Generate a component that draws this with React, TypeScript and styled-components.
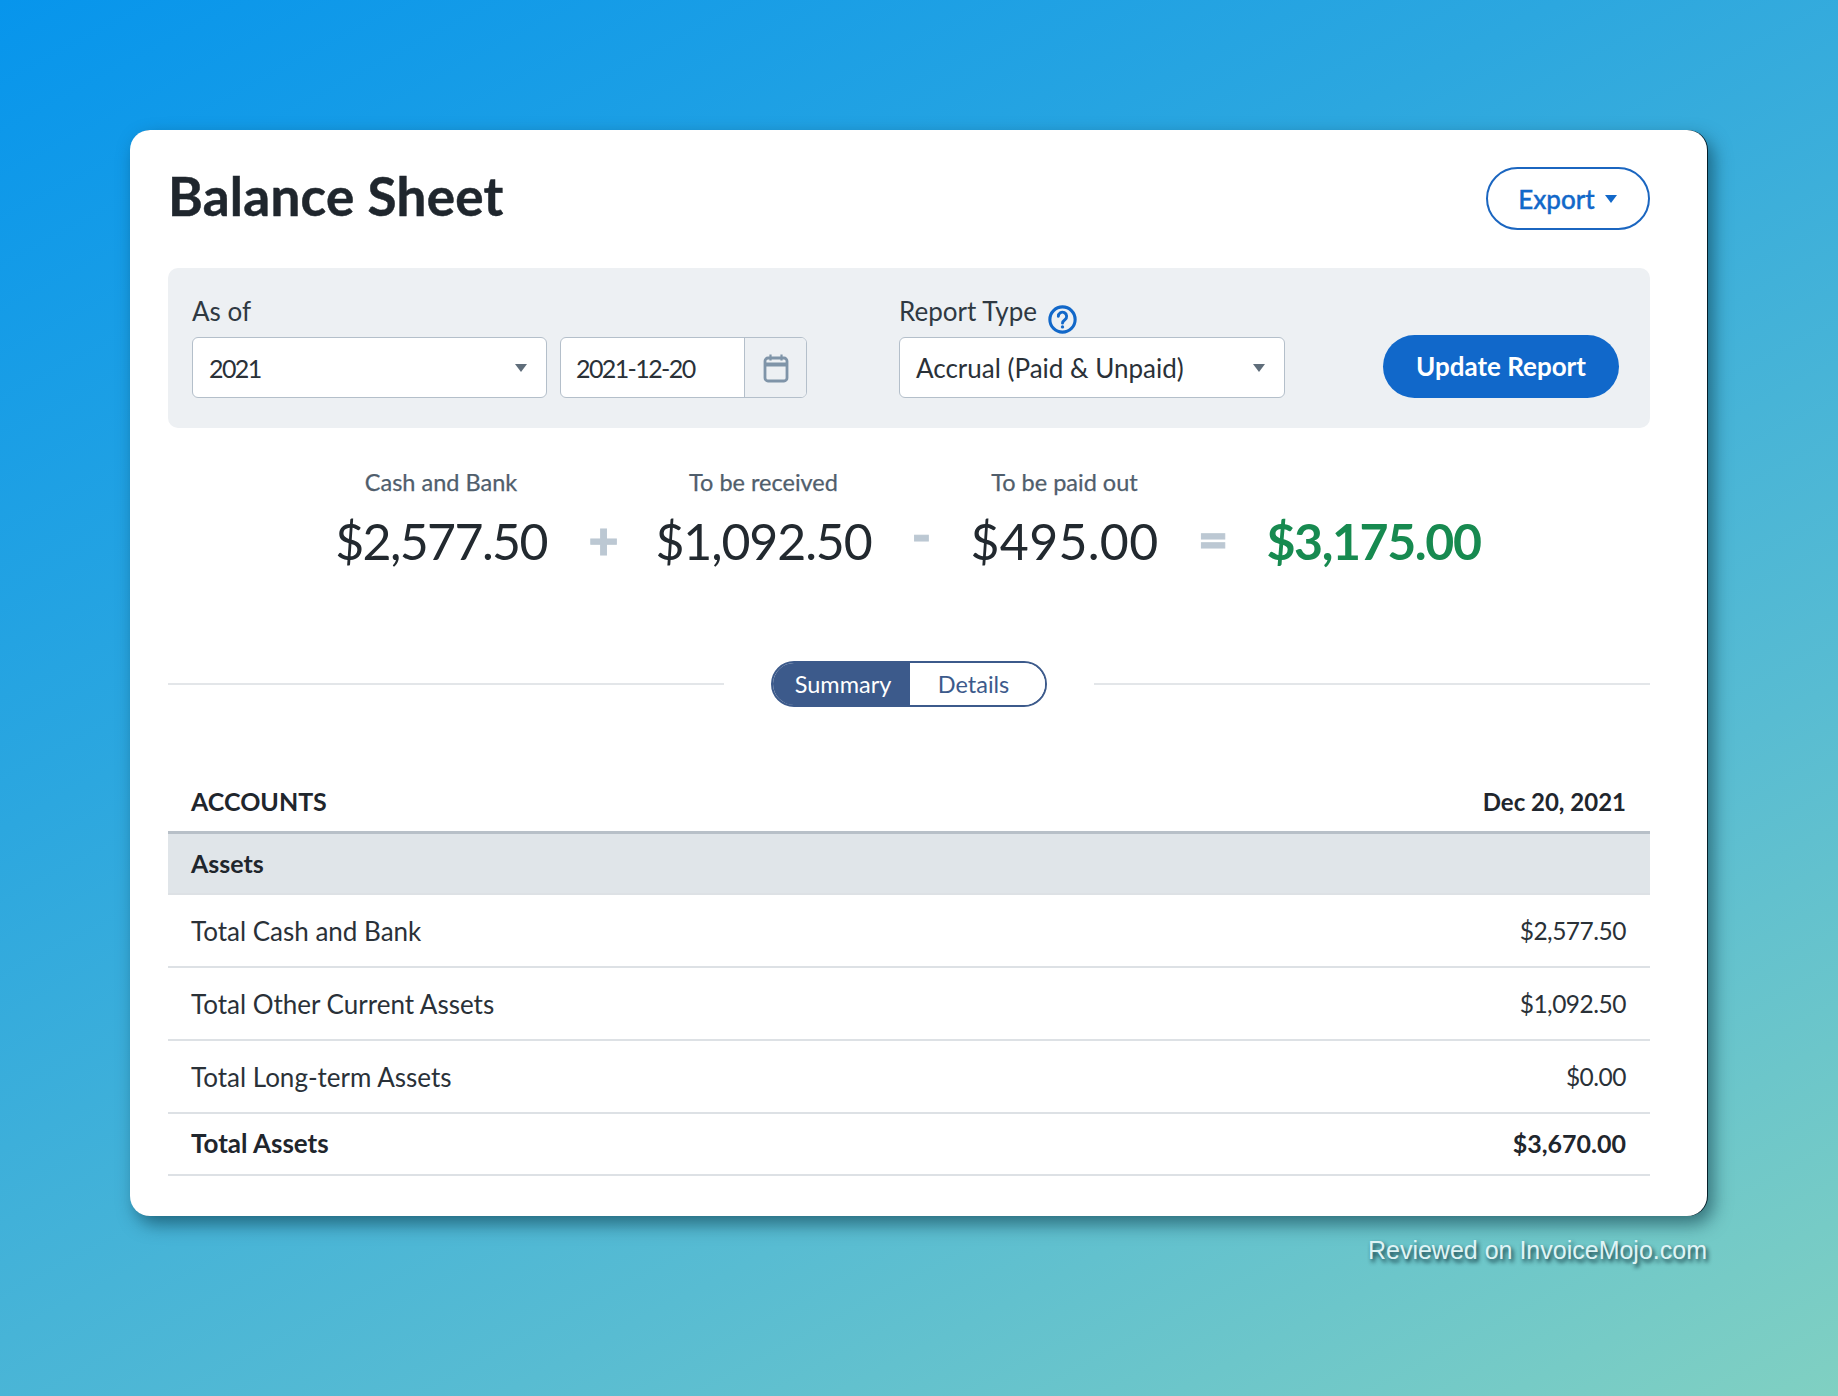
import React from 'react'
import styled, { createGlobalStyle } from 'styled-components'

const rows = [
  { name: 'Total Cash and Bank', amount: '$2,577.50' },
  { name: 'Total Other Current Assets', amount: '$1,092.50' },
  { name: 'Total Long-term Assets', amount: '$0.00' },
]

function Caret({ color = '#5f6d7a' }: { color?: string }) {
  return (
    <svg width="14" height="10" viewBox="0 0 14 10">
      <path d="M1 1h12L7 9z" fill={color} />
    </svg>
  )
}

function CalendarIcon() {
  return (
    <svg width="26" height="30" viewBox="0 0 26 30" fill="none" stroke="#7f94a8" strokeWidth="2.8">
      <rect x="2" y="5" width="22" height="23" rx="3" />
      <path d="M2 11.5h22" strokeWidth="4" />
      <path d="M7.5 1.5v6M18.5 1.5v6" strokeWidth="2.2" />
    </svg>
  )
}

function HelpIcon() {
  return (
    <svg width="29" height="29" viewBox="0 0 28 28" fill="none" stroke="#1268c9">
      <circle cx="14" cy="14" r="12.2" strokeWidth="3" />
      <path d="M10 11a4 4 0 1 1 6.3 3.2c-1.4 1-2.3 1.7-2.3 3.3" strokeWidth="2.8" strokeLinecap="round" />
      <circle cx="14" cy="21.2" r="1.6" fill="#1268c9" stroke="none" />
    </svg>
  )
}

export default function App() {
  return (
    <>
      <GlobalStyle />
      <Page>
        <Card>
          <Header>
            <Title>Balance Sheet</Title>
            <ExportButton>
              Export
              <Caret color="#1268c9" />
            </ExportButton>
          </Header>

          <FilterPanel>
            <Field>
              <Label>As of</Label>
              <Controls>
                <Select $width={355}>
                  <YearText>2021</YearText>
                  <Caret />
                </Select>
                <DateInput>
                  <DateValue>2021-12-20</DateValue>
                  <DateAddon>
                    <CalendarIcon />
                  </DateAddon>
                </DateInput>
              </Controls>
            </Field>
            <Field>
              <Label>
                Report Type
                <HelpWrap>
                  <HelpIcon />
                </HelpWrap>
              </Label>
              <Select $width={386}>
                <span>Accrual (Paid &amp; Unpaid)</span>
                <Caret />
              </Select>
            </Field>
            <UpdateButton>Update Report</UpdateButton>
          </FilterPanel>

          <Summary>
            <Stat $width={208}>
              <StatLabel>Cash and Bank</StatLabel>
              <StatValue $spacing={-1.6}>$2,577.50</StatValue>
            </Stat>
            <Operator $width={117}>+</Operator>
            <Stat $width={203}>
              <StatLabel>To be received</StatLabel>
              <StatValue $spacing={-1.1}>$1,092.50</StatValue>
            </Stat>
            <Operator $width={113} $lift={5}>-</Operator>
            <Stat $width={173}>
              <StatLabel>To be paid out</StatLabel>
              <StatValue $spacing={0.3}>$495.00</StatValue>
            </Stat>
            <Operator $width={124} $lift={1}>=</Operator>
            <Stat $width={197}>
              <StatLabel>&nbsp;</StatLabel>
              <StatValue $total>$3,175.00</StatValue>
            </Stat>
          </Summary>

          <ToggleRow>
            <Rule />
            <Toggle>
              <SummaryTab>Summary</SummaryTab>
              <DetailsTab>Details</DetailsTab>
            </Toggle>
            <Rule />
          </ToggleRow>

          <Table>
            <TableHead>
              <span>ACCOUNTS</span>
              <HeadDate>Dec 20, 2021</HeadDate>
            </TableHead>
            <SectionRow>Assets</SectionRow>
            {rows.map((r) => (
              <Row key={r.name}>
                <span>{r.name}</span>
                <Amount>{r.amount}</Amount>
              </Row>
            ))}
            <TotalRow>
              <span>Total Assets</span>
              <TotalAmount>$3,670.00</TotalAmount>
            </TotalRow>
          </Table>
        </Card>
        <Watermark>Reviewed on InvoiceMojo.com</Watermark>
      </Page>
    </>
  )
}

const GlobalStyle = createGlobalStyle`
  html, body {
    margin: 0;
    padding: 0;
  }

  body {
    font-family: Lato, "Open Sans", sans-serif;
    color: #22292f;
  }

  * {
    box-sizing: border-box;
  }
`

const Page = styled.div`
  width: 1838px;
  height: 1396px;
  padding: 130px 131px 0 130px;
  overflow: hidden;
  background: linear-gradient(152deg, #0795ec 0%, #2ca7df 35%, #58bcd2 70%, #80d0c2 100%);
`

const Card = styled.div`
  height: 1086px;
  padding: 37px 57px 42px 38px;
  background: #fff;
  border-radius: 20px;
  box-shadow: 1px 0 0 rgba(0, 20, 30, 0.9), 6px 8px 18px rgba(0, 40, 55, 0.55);
`

const Header = styled.div`
  display: flex;
  align-items: flex-start;
  justify-content: space-between;
`

const Title = styled.h1`
  margin: -2px 0 0 0;
  font-size: 53px;
  line-height: 62px;
  font-weight: 700;
  letter-spacing: 0.25px;
  color: #1f262d;
  -webkit-text-stroke: 0.5px #1f262d;
`

const ExportButton = styled.button`
  display: flex;
  align-items: center;
  justify-content: center;
  gap: 9px;
  width: 164px;
  height: 63px;
  padding-top: 1px;
  background: #fff;
  border: 2px solid #1b66c0;
  border-radius: 32px;
  color: #1268c9;
  font: 500 26px Lato, sans-serif;
  -webkit-text-stroke: 0.4px #1268c9;
`

const FilterPanel = styled.div`
  display: flex;
  align-items: flex-end;
  gap: 92px;
  height: 160px;
  margin-top: 38px;
  padding: 0 31px 30px 24px;
  background: #edf0f3;
  border-radius: 10px;
`

const Field = styled.div`
  display: flex;
  flex-direction: column;
`

const Label = styled.div`
  display: flex;
  align-items: flex-start;
  height: 30px;
  margin-bottom: 11px;
  font-size: 26px;
  line-height: 30px;
  color: #2f3942;
`

const HelpWrap = styled.span`
  display: inline-flex;
  margin: 9px 0 0 11px;
`

const Controls = styled.div`
  display: flex;
  gap: 13px;
`

const Select = styled.div<{ $width: number }>`
  display: flex;
  align-items: center;
  justify-content: space-between;
  width: ${(p) => p.$width}px;
  height: 61px;
  padding: 0 18px 0 16px;
  background: #fff;
  border: 1.5px solid #b4bfca;
  border-radius: 6px;
  font-size: 26px;
  color: #2a3138;
`

const YearText = styled.span`
  font-size: 25px;
  letter-spacing: -1.6px;
`

const DateInput = styled.div`
  display: flex;
  width: 247px;
  height: 61px;
  background: #fff;
  border: 1.5px solid #b4bfca;
  border-radius: 6px;
  overflow: hidden;
`

const DateValue = styled.div`
  display: flex;
  align-items: center;
  flex: 1;
  padding-left: 15px;
  font-size: 25px;
  letter-spacing: -1.6px;
  color: #2a3138;
`

const DateAddon = styled.div`
  display: flex;
  align-items: center;
  justify-content: center;
  width: 62px;
  background: #edf0f3;
  border-left: 1.5px solid #b4bfca;
`

const UpdateButton = styled.button`
  width: 236px;
  height: 63px;
  margin-left: 6px;
  padding-bottom: 2px;
  background: #1168ca;
  border: 0;
  border-radius: 32px;
  color: #fff;
  font: 700 26px Lato, sans-serif;
`

const Summary = styled.div`
  display: flex;
  margin-top: 41px;
  padding-left: 169px;
`

const Stat = styled.div<{ $width: number }>`
  display: flex;
  flex-direction: column;
  align-items: center;
  flex: none;
  width: ${(p) => p.$width}px;
  white-space: nowrap;
`

const StatLabel = styled.div`
  font-size: 23.5px;
  line-height: 28px;
  margin-top: -1px;
  margin-bottom: 1px;
  color: #505e6c;
  -webkit-text-stroke: 0.25px #505e6c;
`

const StatValue = styled.div<{ $total?: boolean; $spacing?: number }>`
  margin-top: 14px;
  font-size: 50px;
  line-height: 60px;
  letter-spacing: ${(p) => p.$spacing ?? -1.4}px;
  font-weight: ${(p) => (p.$total ? 700 : 400)};
  color: ${(p) => (p.$total ? '#178a50' : '#22292f')};
`

const Operator = styled.div<{ $width: number; $lift?: number }>`
  flex: none;
  width: ${(p) => p.$width}px;
  margin-top: ${(p) => 40 - (p.$lift || 0)}px;
  text-align: center;
  font-size: 52px;
  line-height: 60px;
  font-weight: 900;
  color: #bcc8d3;
  -webkit-text-stroke: 1px #bcc8d3;
`

const ToggleRow = styled.div`
  display: flex;
  align-items: center;
  gap: 47px;
  margin-top: 90px;
`

const Rule = styled.div`
  flex: 1;
  height: 2px;
  background: #e3e6e9;
`

const Toggle = styled.div`
  display: flex;
  height: 46px;
  border: 2px solid #3c5a8b;
  border-radius: 23px;
  overflow: hidden;
`

const SummaryTab = styled.div`
  display: flex;
  align-items: center;
  justify-content: center;
  width: 137px;
  padding-left: 3px;
  font-size: 23.5px;
  background: #3c5a8b;
  color: #fff;
`

const DetailsTab = styled.div`
  display: flex;
  align-items: center;
  justify-content: center;
  width: 135px;
  padding-right: 8px;
  font-size: 23.5px;
  background: #fff;
  color: #3c5a8b;
`

const Table = styled.div`
  margin-top: 66px;
`

const Row = styled.div`
  display: flex;
  align-items: center;
  justify-content: space-between;
  height: 73px;
  padding: 0 24px 0 23px;
  border-bottom: 2px solid #dde1e5;
  font-size: 26px;
  color: #2a3138;
`

const Amount = styled.span`
  font-size: 24.5px;
  letter-spacing: -0.5px;
`

const TotalAmount = styled.span`
  font-size: 25px;
`

const HeadDate = styled.span`
  font-size: 24px;
`

const TableHead = styled(Row)`
  height: 61px;
  padding-bottom: 2px;
  border-bottom: 3px solid #b8c0c8;
  font-weight: 700;
  font-size: 25px;
  color: #1f262d;
`

const SectionRow = styled(Row)`
  height: 61px;
  padding-bottom: 2px;
  background: #e0e5e9;
  font-weight: 700;
  font-size: 25px;
  color: #1f262d;
`

const TotalRow = styled(Row)`
  height: 62px;
  padding-bottom: 2px;
  font-weight: 700;
  color: #1f262d;
`

const Watermark = styled.div`
  margin-top: 20px;
  text-align: right;
  font: 25px "Liberation Sans", Arial, sans-serif;
  color: #dff4f5;
  text-shadow: 2px 3px 4px rgba(0, 30, 40, 0.9);
`
